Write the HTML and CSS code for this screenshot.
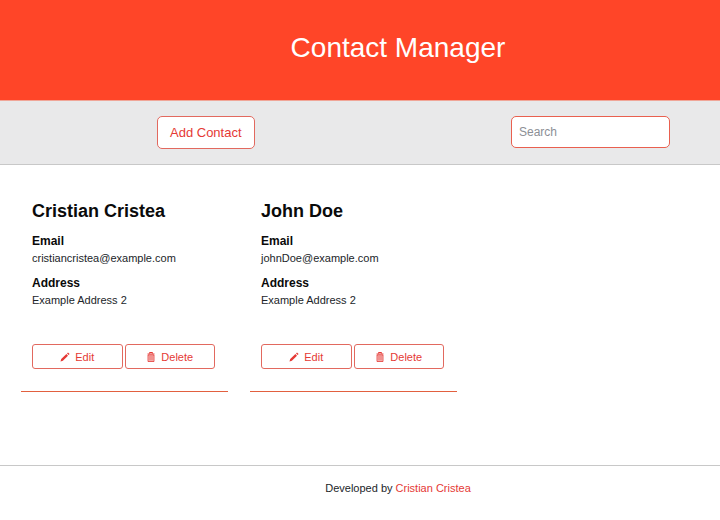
FILE: index.html
```html
<!DOCTYPE html>
<html lang="en">
<head>
<meta charset="utf-8">
<meta name="viewport" content="width=device-width, initial-scale=1">
<title>Contact Manager</title>
<link rel="stylesheet" href="styles.css">
</head>
<body>
<svg class="sprite" aria-hidden="true">
  <symbol id="pencil" viewBox="0 0 10 10">
    <path d="M.5 9.500l.7-2.500L6.400 2.100l1.600 1.600-5.100 5zM7 1.500l1-1 1.600 1.600-1 1z"/>
  </symbol>
  <symbol id="trash" viewBox="0 0 10 10">
    <path d="M3.500 1.500V.5h3v1M1.500 2h7" fill="none" stroke="currentColor"/>
    <path d="M2 3h6v6.500H2z" fill="currentColor" fill-opacity=".3" stroke="currentColor" stroke-width=".8"/>
    <path d="M4 4v4.500M6 4v4.500" stroke="currentColor" stroke-width=".7"/>
  </symbol>
</svg>
<header class="header">
  <h1 class="title">Contact Manager</h1>
</header>
<div class="toolbar">
  <button class="add" type="button">Add Contact</button>
  <input class="search" type="search" placeholder="Search" aria-label="Search">
</div>
<main class="contacts">
  <article class="card">
    <h2 class="name">Cristian Cristea</h2>
    <h3 class="label">Email</h3>
    <p class="value">cristiancristea@example.com</p>
    <h3 class="label">Address</h3>
    <p class="value">Example Address 2</p>
    <div class="actions">
      <button class="action" type="button"><svg class="icon" aria-hidden="true"><use href="#pencil"/></svg>Edit</button>
      <button class="action" type="button"><svg class="icon" aria-hidden="true"><use href="#trash"/></svg>Delete</button>
    </div>
  </article>
  <article class="card">
    <h2 class="name">John Doe</h2>
    <h3 class="label">Email</h3>
    <p class="value">johnDoe@example.com</p>
    <h3 class="label">Address</h3>
    <p class="value">Example Address 2</p>
    <div class="actions">
      <button class="action" type="button"><svg class="icon" aria-hidden="true"><use href="#pencil"/></svg>Edit</button>
      <button class="action" type="button"><svg class="icon" aria-hidden="true"><use href="#trash"/></svg>Delete</button>
    </div>
  </article>
</main>
<footer class="footer">
  <p class="credit">Developed by <a class="link" href="#">Cristian Cristea</a></p>
</footer>
</body>
</html>
```
FILE: styles.css
```css
* {
  box-sizing: border-box;
}

body,
h1,
h2,
h3,
p {
  margin: 0;
}

body {
  background: #fff;
  color: #212529;
  font-family: "Liberation Sans", Arial, sans-serif;
  font-size: 11px;
}

button,
input {
  font-family: inherit;
}

.sprite {
  display: none;
}

.header {
  padding: 30px 0 34px 76px;
  background: #ff4528;
  text-align: center;
}

.title {
  color: #fff;
  font-size: 28px;
  font-weight: 400;
  line-height: 36px;
}

.toolbar {
  display: flex;
  align-items: flex-start;
  justify-content: space-between;
  padding: 15px 50px 15px 157px;
  border-top: 1px solid #f0a698;
  border-bottom: 1px solid #c8c8c8;
  background: #e9e9ea;
}

.add {
  padding: 0 12px;
  border: 1px solid #e2695f;
  border-radius: 5px;
  background: #fff;
  color: #e53935;
  font-size: 13px;
  line-height: 31px;
}

.search {
  width: 159px;
  height: 32px;
  padding: 0 7px;
  border: 1px solid #e9604f;
  border-radius: 5px;
  background: #fff;
  font-size: 12px;
}

.search::placeholder {
  color: #8c9096;
}

.contacts {
  display: grid;
  grid-template-columns: repeat(3, 1fr);
  gap: 22px;
  padding: 22px 34px 73px 21px;
}

.card {
  padding: 11px 13px 22px 11px;
  border-bottom: 1px solid #e2603f;
}

.name {
  margin-bottom: 8px;
  color: #0a0a0a;
  font-size: 18px;
  line-height: 26px;
}

.label {
  color: #0a0a0a;
  font-size: 12px;
  line-height: 18px;
}

.value {
  margin-bottom: 8px;
  line-height: 16px;
}

.actions {
  display: flex;
  gap: 2px;
  margin-top: 36px;
}

.action {
  display: flex;
  flex: 1;
  align-items: center;
  justify-content: center;
  gap: 5px;
  height: 25px;
  padding: 0;
  border: 1px solid #e2695f;
  border-radius: 3px;
  background: #fff;
  color: #e53935;
  font-size: 11px;
}

.icon {
  width: 10px;
  height: 10px;
  fill: currentColor;
}

.footer {
  padding: 14px 0 14px 76px;
  border-top: 1px solid #c8c8c8;
  text-align: center;
}

.credit {
  line-height: 16px;
}

.link {
  color: #e53935;
  text-decoration: none;
}
```
